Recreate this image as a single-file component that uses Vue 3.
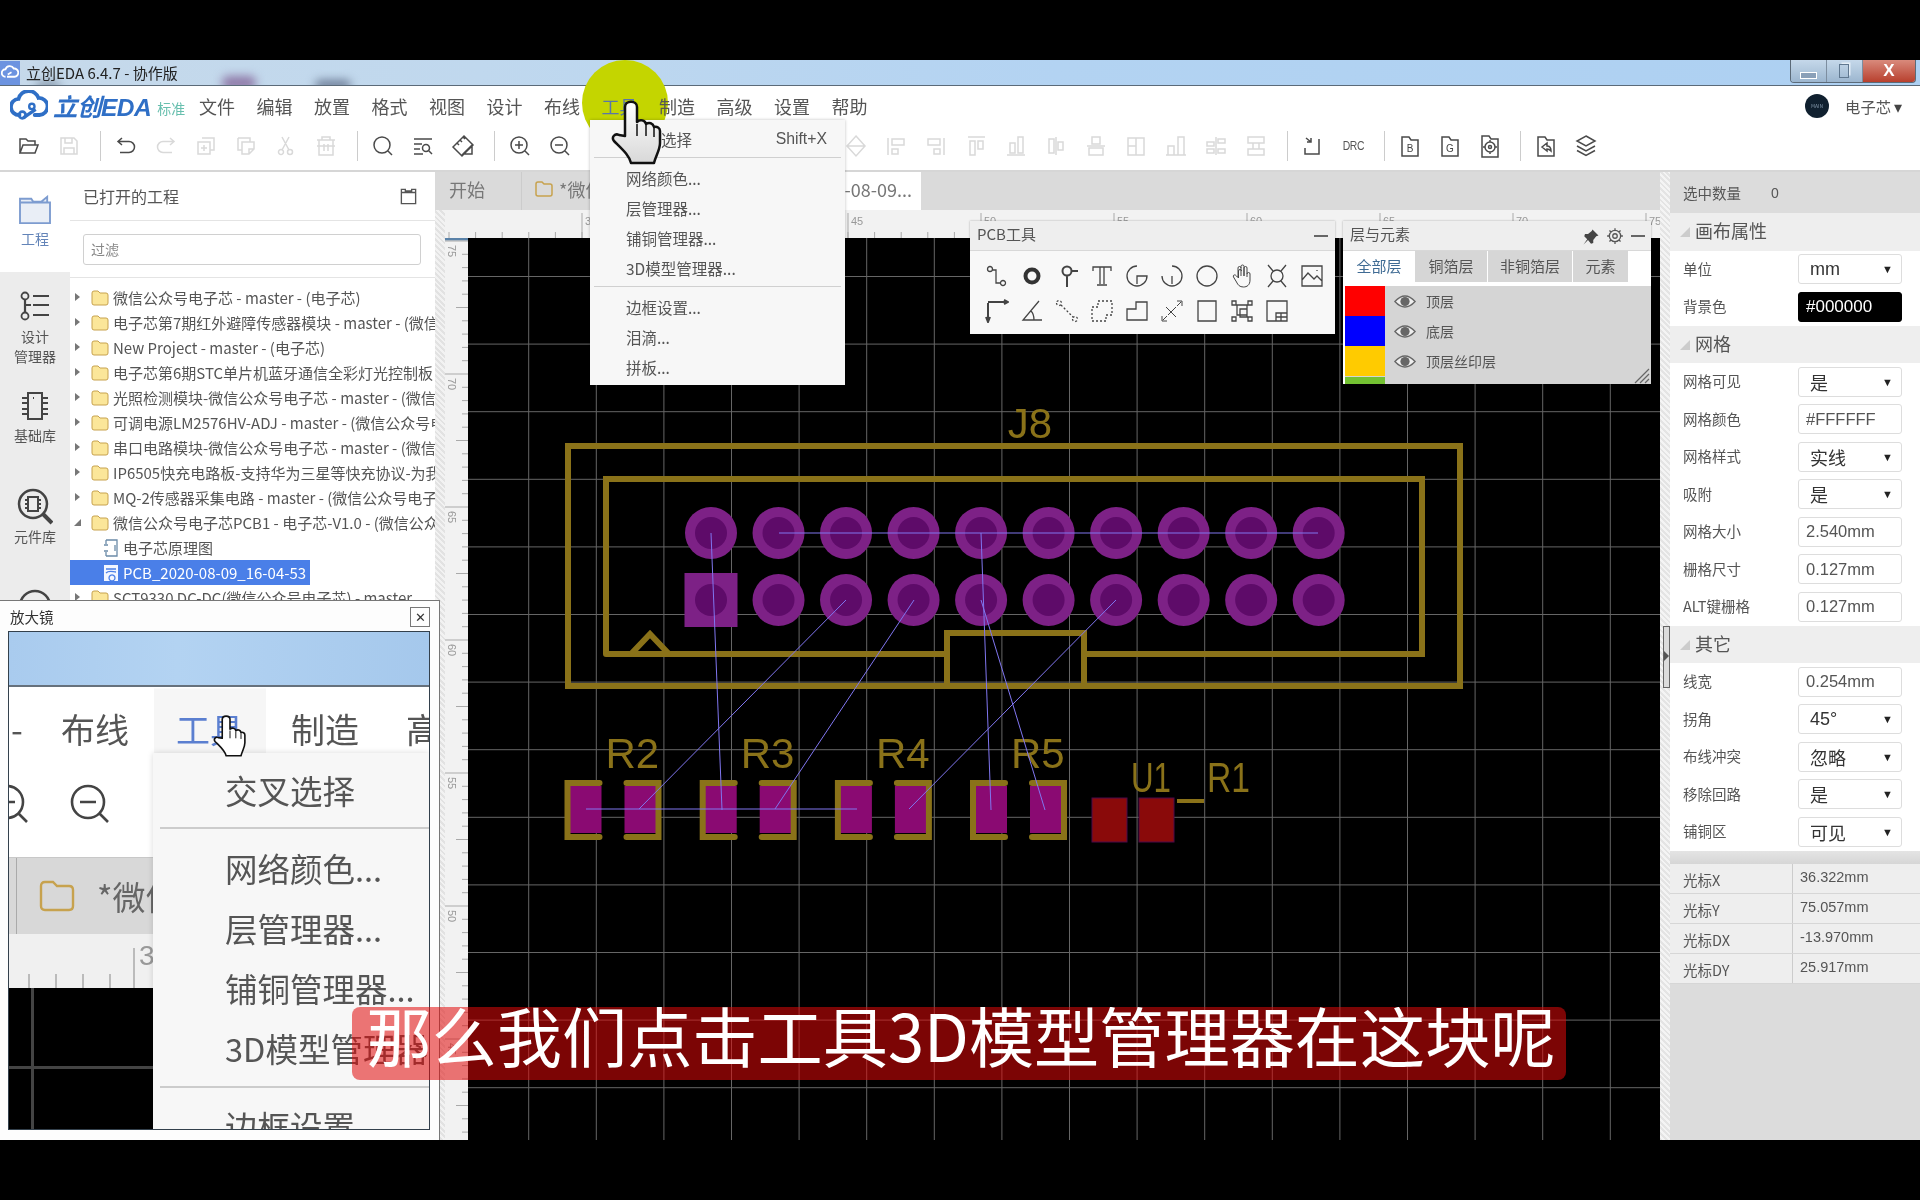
<script setup>
const c = (x, y, r) => `M${x - r} ${y}a${r} ${r} 0 1 0 ${2 * r} 0a${r} ${r} 0 1 0 ${-2 * r} 0`
const range = (a, step, n) => Array.from({ length: n }, (_, i) => a + i * step)

const menus = ['文件', '编辑', '放置', '格式', '视图', '设计', '布线', '工具', '制造', '高级', '设置', '帮助']

const I = {
  open: 'M3 19V5h6l2 2h7v4M3 19h15l3-8H6z',
  save: 'M4 4h13l3 3v13H4zM8 4v5h7V4M7 20v-6h10v6',
  undo: 'M8 4L4 7.5 8 11M4 7.5h11a5.5 5.5 0 0 1 0 11H6',
  redo: 'M16 4l4 3.5-4 3.5M20 7.5H9a5.5 5.5 0 0 0 0 11h9',
  copy: 'M8 4h12v12h-4M4 8h12v12H4zM10 11v6M7 14h6',
  paste: 'M4 4h12v4M4 4v12h4M8 8h12v7l-5 5H8zM15 20v-5h5',
  cut: c(7, 18, 2.5) + c(16, 18, 2.5) + 'M8 16L15 3M15 16L8 3',
  del: 'M8 6V3h8v3M3 6h18M5 6v15h14V6M10 10v7M14 10v7M3 12h18',
  search: c(11, 11, 8) + 'M17 17l4 4',
  find: 'M3 5h18M3 10h8M3 15h6M3 20h9' + c(15, 14, 3.5) + 'M18 17l3 3',
  ruler: 'M2 13L13 2l9 9-11 11zM6 9l2 2M9 6l2 2M12 3l2 2M12 20h9v-9z',
  zin: c(11, 11, 8) + 'M17 17l4 4M7 11h8M11 7v8',
  zout: c(11, 11, 8) + 'M17 17l4 4M7 11h8',
  dia: 'M12 2l9 10-9 10-9-10zM3 12h18',
  al1: 'M4 4v17M8 5h12v6H8zM8 15h6v5H8z',
  al2: 'M20 4v17M4 5h12v6H4zM10 15h6v5h-6z',
  al3: 'M4 3h17M6 7h5v14H6zM14 7h5v8h-5z',
  al4: 'M3 21h18M6 9h5v10H6zM14 3h5v16h-5z',
  al5: 'M12 3v18M5 5h5v14H5zM14 8h5v8h-5z',
  al6: 'M3 12h18M8 3h8v7H8zM5 14h14v7H5z',
  al7: 'M4 4h16v17H4zM12 4v17M4 12h8',
  al8: 'M4 12h6v9H4zM14 3h6v18h-6zM2 21h20',
  al9: 'M12 3v18M3 8h7v4H3zM14 5h7v4h-7zM3 15h7v4H3zM14 15h7v4h-7z',
  al10: 'M4 3h16v6H4zM4 15h16v6H4zM9 9v6M15 9v6',
  route: 'M5 4l5 4M10 4v4H6M18 5v15H4v-6',
  bfile: 'M4 3h7l2 3h7v16H4z',
  cfg: c(12, 13, 5) + c(12, 13, 1.5) + 'M12 6v2M12 18v2M5 13h2M17 13h2M4 2h7l2 3h7v18H4z',
  repl: 'M4 3h7l2 3h7v16H4zM8 13l5-4v3c3 0 4 2 4 5-2-2-2-2-4-2v2z',
  layers: 'M12 2l9 5-9 5-9-5zM3 12l9 5 9-5M3 16.5l9 5 9-5',
}
const tb = [
  { w: 'g1', items: [['open'], ['save', 1]] },
  { w: 'g2', items: [['undo'], ['redo', 1], ['copy', 1], ['paste', 1], ['cut', 1], ['del', 1]] },
  { w: 'g3', items: [['search'], ['find'], ['ruler']] },
  { w: 'g4', items: [['zin'], ['zout']] },
  { w: 'g5', items: [[''], [''], [''], [''], [''], [''], ['dia', 1], ['al1', 1], ['al2', 1], ['al3', 1], ['al4', 1], ['al5', 1], ['al6', 1], ['al7', 1], ['al8', 1], ['al9', 1], ['al10', 1]] },
  { w: 'g6', items: [['route'], ['DRC']] },
  { w: 'g7', items: [['bfile', 0, 'B'], ['bfile', 0, 'G'], ['cfg']] },
  { w: 'g8', items: [['repl'], ['layers']] },
]

const tree = [
  { t: '微信公众号电子芯 - master - (电子芯)', k: 'f' },
  { t: '电子芯第7期红外避障传感器模块 - master - (微信公众号电子芯)', k: 'f' },
  { t: 'New Project - master - (电子芯)', k: 'f' },
  { t: '电子芯第6期STC单片机蓝牙通信全彩灯光控制板 - master', k: 'f' },
  { t: '光照检测模块-微信公众号电子芯 - master - (微信公众号电子芯)', k: 'f' },
  { t: '可调电源LM2576HV-ADJ - master - (微信公众号电子芯)', k: 'f' },
  { t: '串口电路模块-微信公众号电子芯 - master - (微信公众号电子芯)', k: 'f' },
  { t: 'IP6505快充电路板-支持华为三星等快充协议-为我所用', k: 'f' },
  { t: 'MQ-2传感器采集电路 - master - (微信公众号电子芯)', k: 'f' },
  { t: '微信公众号电子芯PCB1 - 电子芯-V1.0 - (微信公众号)', k: 'o' },
  { t: '电子芯原理图', k: 's' },
  { t: 'PCB_2020-08-09_16-04-53', k: 'p' },
  { t: 'SCT9330 DC-DC(微信公众号电子芯) - master', k: 'f' },
]

const hGrid = range(276.5, 67.6, 13)
const vGrid = range(528.7, 67.6, 17)
const topPad = range(711, 67.52, 10)
const rats = [
  [779, 533, 1318, 533], [711, 533, 722, 810], [981, 533, 991, 810], [981, 600, 1045, 810],
  [846, 600, 639, 809], [914, 600, 775, 809], [1116, 600, 909, 809], [586, 809, 857, 809],
]
const res = [{ x: 564.5, n: 'R2' }, { x: 699.7, n: 'R3' }, { x: 834.9, n: 'R4' }, { x: 970, n: 'R5' }]

const topTicks = range(449, 26.6, 46).map((x, i) => ({ x, major: (i + 0) % 5 === 0 }))
const topLabels = [[582, '35'], [715, '40'], [848, '45'], [981, '50'], [1114, '55'], [1247, '60'], [1380, '65'], [1513, '70'], [1646, '75']]
const leftTicks = range(241, 13.3, 68).map((y, i) => ({ y, major: i % 10 === 0, mid: i % 5 === 0 }))
const leftLabels = [[241, '75'], [374, '70'], [507, '65'], [640, '60'], [773, '55'], [906, '50'], [1039, '45']]

const tools1 = [
  { d: c(5, 5, 2.5) + 'M7 6h4v13h4' + c(18, 19, 2.5) },
  { d: c(12, 12, 6.5), s: 'bold' },
  { d: c(12, 7, 4.5) + 'M16.5 7H23M12 11.5V23', s: 'mid' },
  { d: 'M3 7V3h18v4M10 3v17M14 3v17M7 21h10' },
  { d: 'M12 2a10 10 0 1 0 10 10H12v8' },
  { d: 'M12 2a10 10 0 1 1-10 10M12 12v8' },
  { d: c(12, 12, 10) },
  { d: 'M8 13V4a1.5 1.5 0 0 1 3 0M11 12V2.500a1.500 1.500 0 0 1 3 0V12M14 12V4a1.500 1.500 0 0 1 3 0v9M17 10a1.500 1.500 0 0 1 3 0v6c0 5-3 7-6.500 7-4 0-5.500-2-7-5l-3-5c-1-2 1.500-3 3-1l2 2V7a1.500 1.500 0 0 1 3 0', s: 'thin' },
  { d: c(12, 12, 6) + 'M3 1l5 6M21 1l-5 6M3 23l5-6M21 23l-5-6' },
  { d: 'M2 2h20v20H2zM2 16l6-7 6 6 3-3 5 5M17 6v1' },
]
const tools2 = [
  { d: 'M3 4v18M5 3h17M3 3h2M1 18l2 5 2-5M19 1l4 2-4 2', s: 'mid' },
  { d: 'M19 2L3 21h19M11 12c2 2 3 5 3 9' },
  { d: c(4, 4, 2.5) + c(20, 20, 2.5) + 'M6 6l12 12', s: 'dash' },
  { d: 'M8 2h14v14h-6v6H2V8h6z', s: 'dash' },
  { d: 'M2 21V10h9V3h11v18z' },
  { d: 'M8 16l8-8M3 21l4-4M21 3l-4 4M2 17v5h5M22 7V2h-5M6 8l10 10', s: 'thin' },
  { d: 'M3 2h18v20H3z' },
  { d: 'M7 6h10v10H7zM10 10h7v8h-7zM2 2h4v4H2zM18 2h4v4h-4zM2 18h4v4H2zM18 18h4v4h-4z' },
  { d: 'M2 2h20v20H2zM11 14h11v8H11zM11 18h11M16 14v8' },
]

const teeth = range(0, 45, 8).map((a) => {
  const r = (a * Math.PI) / 180
  return `M${(12 + 7.500 * Math.cos(r)).toFixed(1)} ${(12 + 7.500 * Math.sin(r)).toFixed(1)}L${(12 + 10.500 * Math.cos(r)).toFixed(1)} ${(12 + 10.500 * Math.sin(r)).toFixed(1)}`
}).join('')
const gear = c(12, 12, 3) + c(12, 12, 7.500) + teeth

const layers = [
  { n: '顶层', cls: 'red' },
  { n: '底层', cls: 'blue' },
  { n: '顶层丝印层', cls: 'yellow' },
]
const props = [
  { title: '画布属性', rows: [{ l: '单位', v: 'mm', sel: 1 }, { l: '背景色', v: '#000000', dark: 1 }] },
  { title: '网格', rows: [
    { l: '网格可见', v: '是', sel: 1 }, { l: '网格颜色', v: '#FFFFFF' }, { l: '网格样式', v: '实线', sel: 1 },
    { l: '吸附', v: '是', sel: 1 }, { l: '网格大小', v: '2.540mm' }, { l: '栅格尺寸', v: '0.127mm' }, { l: 'ALT键栅格', v: '0.127mm' },
  ] },
  { title: '其它', rows: [
    { l: '线宽', v: '0.254mm' }, { l: '拐角', v: '45°', sel: 1 }, { l: '布线冲突', v: '忽略', sel: 1 },
    { l: '移除回路', v: '是', sel: 1 }, { l: '铺铜区', v: '可见', sel: 1 },
  ] },
]
const cursorRows = [['光标X', '36.322mm'], ['光标Y', '75.057mm'], ['光标DX', '-13.970mm'], ['光标DY', '25.917mm']]
const menuGroups = [
  [['网络颜色...'], ['层管理器...'], ['铺铜管理器...'], ['3D模型管理器...']],
  [['边框设置...'], ['泪滴...'], ['拼板...']],
]
const magItems = ['网络颜色...', '层管理器...', '铺铜管理器...', '3D模型管理器...']
const handD = 'M14 36V7c0-7 12-7 12 0v15c3-3 8-2 9 2 3-2 7-1 8 3 3-1 6 1 6 4v12c0 7-4 12-6 20H20c-2-8-8-13-17-22-3-4 1-8 5-6z'
const handL = 'M26 24v12M35 25v11M43 28v9'
const magTicks = range(19, 27, 4)
</script>

<template>
  <div class="root">
    <div class="band"></div>
    <div class="win">
      <div class="titlebar">
        <i class="blob b1"></i><i class="blob b2"></i><i class="blob b3"></i>
        <span class="appicon">
          <svg viewBox="0 0 24 24" width="18" height="18"><path d="M6 17a5 5 0 0 1 0-10 6 6 0 0 1 11-1 5 5 0 0 1 1 11H8" fill="none" stroke="#fff" stroke-width="2.500"/><path d="M9 14l5-3" stroke="#fff" stroke-width="2"/></svg>
        </span>
        <span class="wintitle">立创EDA 6.4.7 - 协作版</span>
        <div class="winbtns">
          <span class="wb"><i class="wmin"></i></span>
          <span class="wb"><i class="wmax"></i></span>
          <span class="wb close">X</span>
        </div>
      </div>

      <div class="menubar">
        <div class="logo">
          <svg viewBox="0 0 40 32" width="38" height="31"><path d="M10 26a8.500 8.500 0 0 1-1-17A11 11 0 0 1 30 8a9 9 0 0 1 1 18h-5" fill="none" stroke="#2f6fc6" stroke-width="4" stroke-linecap="round"/><path d="M14 29l13-9" stroke="#2f6fc6" stroke-width="3.500"/><circle cx="13" cy="26" r="3.500" fill="none" stroke="#2f6fc6" stroke-width="3"/><circle cx="23" cy="17" r="2.800" fill="none" stroke="#2f6fc6" stroke-width="2.500"/></svg>
          <span class="logotext">立创EDA</span>
          <span class="logotag">标准</span>
        </div>
        <span v-for="m in menus" :key="m" class="menu" :class="{ act: m === '工具' }">{{ m }}</span>
        <div class="user">
          <span class="avatar"><em>MAIN</em></span>
          <span class="uname">电子芯</span>
          <span class="ucaret">▾</span>
        </div>
      </div>

      <div class="toolbar">
        <template v-for="(g, gi) in tb" :key="g.w">
          <i v-if="gi" class="sep" :class="'s' + g.w"></i>
          <span v-for="(it, i) in g.items" :key="i" class="tbtn">
            <span v-if="it[0] === 'DRC'" class="drc">DRC</span>
            <svg v-else-if="it[0]" viewBox="0 0 24 24" width="24" height="24">
              <path :d="I[it[0]]" fill="none" :stroke="it[1] ? '#d9d9d9' : '#4a4a4a'" stroke-width="1.500"/>
              <text v-if="it[2]" x="12" y="18" class="tbl">{{ it[2] }}</text>
            </svg>
          </span>
        </template>
      </div>

      <div class="body">
        <aside class="side">
          <div class="sitem s1 active">
            <svg viewBox="0 0 36 32" width="36" height="30"><path d="M2 8V4h12l2 3h9l6-5v6M2 8h32v22H2z" fill="#e9eef6" stroke="#7d9cd0" stroke-width="2"/></svg>
            <span>工程</span>
          </div>
          <div class="sitem s2">
            <svg viewBox="0 0 32 30" width="32" height="30"><path d="M6 8v14M14 5h16M14 14h16M14 24h16" stroke="#444" stroke-width="2.200" fill="none"/><path :d="c(6, 5, 3.500) + c(6, 25, 3.500)" stroke="#444" stroke-width="1.800" fill="none"/><path d="M6 14h6" stroke="#444" stroke-width="2"/></svg>
            <span>设计<br />管理器</span>
          </div>
          <div class="sitem s3">
            <svg viewBox="0 0 32 32" width="32" height="32"><path d="M9 3h14v26H9zM3 8h6M3 13h6M3 19h6M3 24h6M23 8h6M23 13h6M23 19h6M23 24h6" fill="none" stroke="#444" stroke-width="2"/><path d="M14 8h1" stroke="#444" stroke-width="2"/></svg>
            <span>基础库</span>
          </div>
          <div class="sitem s4">
            <svg viewBox="0 0 36 38" width="36" height="38"><path :d="c(16, 16, 14)" fill="none" stroke="#444" stroke-width="2.500"/><path d="M26 26l9 9" stroke="#444" stroke-width="4"/><path d="M11 9h10v14H11zM8 12h3M8 16h3M8 20h3M21 12h3M21 16h3M21 20h3" fill="none" stroke="#444" stroke-width="2"/></svg>
            <span>元件库</span>
          </div>
          <div class="sitem s5">
            <svg viewBox="0 0 36 36" width="36" height="36"><path :d="c(18, 18, 15)" fill="none" stroke="#444" stroke-width="2.500"/></svg>
          </div>
        </aside>

        <section class="proj">
          <div class="projhead">
            <span>已打开的工程</span>
            <svg viewBox="0 0 24 24" width="19" height="19"><path d="M3 7V3h5v2h8V3h5v4M3 7h18v14H3z" fill="none" stroke="#555" stroke-width="1.700"/></svg>
          </div>
          <div class="filter"><div class="finput">过滤</div></div>
          <div class="tree">
            <div v-for="(r, i) in tree" :key="i" class="trow" :class="'k' + r.k">
              <i v-if="r.k === 'f'" class="caret"></i>
              <i v-if="r.k === 'o'" class="caret down"></i>
              <svg v-if="r.k === 'f' || r.k === 'o'" viewBox="0 0 18 16" width="18" height="16" class="fold"><path d="M1 3q0-2 2-2h4l2 2h6q2 0 2 2v8q0 2-2 2H3q-2 0-2-2z" fill="#fbe699" stroke="#c7a24e"/></svg>
              <svg v-if="r.k === 's'" viewBox="0 0 16 18" width="16" height="18" class="leaf"><path d="M3 1h11v16H3M1 6h4M1 12h4M3 1v4M3 13v4M12 6v6" fill="none" stroke="#6b8ba8" stroke-width="1.300"/></svg>
              <svg v-if="r.k === 'p'" viewBox="0 0 16 18" width="16" height="18" class="leaf"><path d="M1 1h14v16H1z" fill="#f2f6ff"/><path d="M3 5h10M3 9c3-3 7-1 10-1M6 14a3 3 0 1 0 0-.1" fill="none" stroke="#4a7fe8" stroke-width="1.300"/></svg>
              <span class="tlabel">{{ r.t }}</span>
            </div>
          </div>
        </section>

        <section class="center">
          <div class="tabs">
            <span class="tab taba">开始</span>
            <span class="tab tabb">
              <svg viewBox="0 0 18 16" width="18" height="16"><path d="M1 3q0-2 2-2h4l2 2h6q2 0 2 2v8q0 2-2 2H3q-2 0-2-2z" fill="none" stroke="#c7a24e" stroke-width="1.500"/></svg>
              *微信公众号
            </span>
            <span class="tab tabc">PCB_2020-08-09...</span>
          </div>
          <div class="workarea">
            <div class="dots"></div>
            <div class="stage">
              <svg class="rtop" viewBox="445 210 1215 28" width="1215" height="28">
                <line v-for="t in topTicks" :key="t.x" :x1="t.x" :x2="t.x" y1="232" y2="238" stroke="#aaa"/>
                <g v-for="l in topLabels" :key="l[1]">
                  <line :x1="l[0]" :x2="l[0]" y1="213" y2="238" stroke="#aaa"/>
                  <text :x="l[0] + 3" y="225" class="rl">{{ l[1] }}</text>
                </g>
              </svg>
              <div class="stage2">
                <svg class="rleft" viewBox="445 238 23 902" width="23" height="902">
                  <line x1="445" x2="468" y1="239" y2="239" stroke="#5a82a8" stroke-width="3"/>
                  <line v-for="t in leftTicks" :key="t.y" :y1="t.y" :y2="t.y" :x1="t.major ? 445 : (t.mid ? 456 : 462)" x2="468" stroke="#aaa"/>
                  <text v-for="l in leftLabels" :key="l[1]" :transform="`translate(448 ${l[0] + 4}) rotate(90)`" class="rl">{{ l[1] }}</text>
                </svg>
                <svg class="board" viewBox="468 238 1192 902" width="1192" height="902">
                  <rect x="468" y="238" width="1192" height="902" fill="#000"/>
                  <line v-for="y in hGrid" :key="y" x1="468" x2="1660" :y1="y" :y2="y" stroke="#666"/>
                  <line v-for="x in vGrid" :key="x" :x1="x" :x2="x" y1="238" y2="1140" stroke="#666"/>
                  <g fill="none" stroke="#8a7219" stroke-width="6" stroke-linecap="round">
                    <path d="M568 446H1460V686H568zM606 654V479H1422V654H1084M606 654H947M947 686V633H1084V686"/>
                    <path d="M632 653L650 634 668 653"/>
                  </g>
                  <text x="1030" y="438" class="silk mid">J8</text>
                  <g v-for="x in topPad" :key="x">
                    <circle :cx="x" cy="533" r="26" fill="#7d2186"/>
                    <circle :cx="x" cy="533" r="16" fill="#5e0b69"/>
                  </g>
                  <g v-for="(x, i) in topPad" :key="'b' + x">
                    <rect v-if="i === 0" x="684.500" y="573" width="53" height="54" fill="#7d2186"/>
                    <circle v-else :cx="x" cy="600" r="26" fill="#7d2186"/>
                    <circle :cx="x" cy="600" r="16" fill="#5e0b69"/>
                  </g>
                  <g v-for="r in res" :key="r.n">
                    <rect :x="r.x + 5" y="786" width="32" height="47" fill="#8a0a72"/>
                    <rect :x="r.x + 60" y="786" width="32" height="47" fill="#8a0a72"/>
                    <path :d="`M${r.x + 35} 783H${r.x + 3}V837H${r.x + 35}M${r.x + 62} 783H${r.x + 94}V837H${r.x + 62}`" fill="none" stroke="#8a7219" stroke-width="6" stroke-linecap="round"/>
                    <text :x="r.x + 41" y="768" class="silk">{{ r.n }}</text>
                  </g>
                  <rect x="1092" y="798" width="35" height="44" fill="#8a0a0a" stroke="#4a0a4a"/>
                  <rect x="1139" y="798" width="35" height="44" fill="#8a0a0a" stroke="#4a0a4a"/>
                  <text x="1131" y="792" class="silk" textLength="40" lengthAdjust="spacingAndGlyphs">U1</text>
                  <text x="1207" y="792" class="silk" textLength="43" lengthAdjust="spacingAndGlyphs">R1</text>
                  <line x1="1177" x2="1204" y1="801" y2="801" stroke="#8a7219" stroke-width="4"/>
                  <line v-for="(l, i) in rats" :key="i" :x1="l[0]" :y1="l[1]" :x2="l[2]" :y2="l[3]" stroke="#8076f0"/>
                </svg>
              </div>
            </div>
          </div>
        </section>

        <aside class="props">
          <div class="pdots"><span class="handle"><i></i></span></div>
          <div class="pmain">
            <div class="selcount"><span>选中数量</span><span class="zero">0</span></div>
            <template v-for="s in props" :key="s.title">
              <div class="psec"><i class="ptri"></i>{{ s.title }}</div>
              <div v-for="r in s.rows" :key="r.l" class="prow">
                <span class="plabel">{{ r.l }}</span>
                <span class="pfield" :class="{ dark: r.dark, sel: r.sel }">
                  <span>{{ r.v }}</span><em v-if="r.sel">▼</em>
                </span>
              </div>
            </template>
            <div class="pstrip"></div>
            <div v-for="r in cursorRows" :key="r[0]" class="crow">
              <span class="cl">{{ r[0] }}</span><span class="cv">{{ r[1] }}</span>
            </div>
          </div>
        </aside>
      </div>
    </div>
    <div class="band"></div>

    <i class="spot"></i>

    <div class="dropdown">
      <div class="ditem dfirst"><span>交叉选择</span><span class="key">Shift+X</span></div>
      <i class="ddiv d1"></i>
      <div v-for="it in menuGroups[0]" :key="it[0]" class="ditem">{{ it[0] }}</div>
      <i class="ddiv d2"></i>
      <div v-for="it in menuGroups[1]" :key="it[0]" class="ditem">{{ it[0] }}</div>
    </div>

    <svg class="hand" viewBox="0 0 52 68" width="52" height="68">
      <defs><linearGradient id="hg" x1="0" y1="0" x2="0" y2="1"><stop offset="0" stop-color="#fff"/><stop offset="1" stop-color="#d8d8d8"/></linearGradient></defs>
      <path :d="handD" fill="url(#hg)" stroke="#111" stroke-width="2.500" stroke-linejoin="round"/>
      <path :d="handL" stroke="#111" stroke-width="1.500"/>
    </svg>

    <div class="tool-panel">
      <div class="ptitle"><span>PCB工具</span><i class="pminus"></i></div>
      <div class="toolgrid">
        <span v-for="(t, i) in tools1" :key="'a' + i" class="tool">
          <svg viewBox="0 0 24 24" width="24" height="24"><path :d="t.d" class="tp" :class="t.s" /></svg>
        </span>
        <span v-for="(t, i) in tools2" :key="'b' + i" class="tool">
          <svg viewBox="0 0 24 24" width="24" height="24"><path :d="t.d" class="tp" :class="t.s" /></svg>
        </span>
      </div>
    </div>

    <div class="layer-panel">
      <div class="ptitle"><span>层与元素</span>
        <svg class="pin" viewBox="0 0 24 24" width="18" height="18"><path d="M14 2l8 8-3 1-4 5 0 4-3 1-4-5-6 6 5-7-4-4 1-3 4 0 5-4z" fill="#444"/></svg>
        <svg class="gearic" viewBox="0 0 24 24" width="18" height="18"><path :d="gear" fill="none" stroke="#555" stroke-width="1.700"/></svg>
        <i class="pminus small"></i>
      </div>
      <div class="ltabs">
        <span class="ltab on">全部层</span><span class="ltab t2">铜箔层</span><span class="ltab t3">非铜箔层</span><span class="ltab t4">元素</span>
      </div>
      <div class="lbody">
        <div v-for="l in layers" :key="l.n" class="lrow">
          <i class="swatch" :class="l.cls"></i>
          <svg viewBox="0 0 24 16" width="22" height="15"><path d="M1 8q11-12 22 0-11 12-22 0z" fill="#eee" stroke="#666" stroke-width="1.500"/><circle cx="12" cy="8" r="5" fill="#666"/></svg>
          <span>{{ l.n }}</span>
        </div>
        <i class="swatch green"></i>
        <svg class="grip" viewBox="0 0 16 16" width="16" height="16"><path d="M15 1L1 15M15 6L6 15M15 11L11 15" stroke="#666" stroke-width="1.200"/></svg>
      </div>
    </div>

    <div class="mag">
      <div class="magtitle"><span>放大镜</span><span class="magclose">✕</span></div>
      <div class="magview">
        <div class="magband"></div>
        <div class="magwhite">
          <div class="magmenu">
            <span class="mm dash">-</span><span class="mm">布线</span><span class="mm on">工具</span><span class="mm">制造</span><span class="mm">高级</span>
          </div>
          <div class="magicons">
            <svg viewBox="0 0 24 24" width="48" height="48" class="mz1"><path :d="I.zin" fill="none" stroke="#444" stroke-width="1.300"/></svg>
            <svg viewBox="0 0 24 24" width="48" height="48" class="mz2"><path :d="I.zout" fill="none" stroke="#444" stroke-width="1.300"/></svg>
          </div>
        </div>
        <div class="magtabs">
          <i class="magtabedge"></i>
          <svg viewBox="0 0 18 16" width="36" height="32"><path d="M1 3q0-2 2-2h4l2 2h6q2 0 2 2v8q0 2-2 2H3q-2 0-2-2z" fill="none" stroke="#c7a24e" stroke-width="1.200"/></svg>
          <span>*微信</span>
        </div>
        <div class="magruler">
          <i v-for="x in magTicks" :key="x" class="mtick" :style="{ left: x + 'px' }"></i>
          <i class="mtick big"></i><span class="m3">3</span>
        </div>
        <div class="magblack"><i class="mgv"></i><i class="mgh"></i></div>
        <div class="magdrop">
          <div class="mitem mfirst">交叉选择</div>
          <i class="mdiv"></i>
          <div v-for="m in magItems" :key="m" class="mitem">{{ m }}</div>
          <i class="mdiv two"></i>
          <div class="mitem last">边框设置</div>
        </div>
        <svg class="mhand" viewBox="0 0 52 68" width="34" height="44">
          <path :d="handD" fill="#fff" stroke="#111" stroke-width="2.500" stroke-linejoin="round"/>
          <path :d="handL" stroke="#111" stroke-width="1.500"/>
        </svg>
      </div>
    </div>

    <div class="subtitle">那么我们点击工具3D模型管理器在这块呢</div>
  </div>
</template>

<style>
html, body { margin: 0; background: #000; }
</style>

<style scoped>
.root { position: relative; width: 1920px; height: 1200px; overflow: hidden; background: #000; font-family: "Noto Sans CJK SC", "Liberation Sans", sans-serif; color: #555; filter: blur(0.35px); }
.band { height: 60px; background: #000; }
.win { height: 1080px; display: flex; flex-direction: column; background: #fff; }
i, em { font-style: normal; display: block; }

.titlebar { position: relative; height: 25px; flex: none; display: flex; align-items: center; overflow: hidden; border-bottom: 1px solid #5b6a78; box-sizing: content-box; background: linear-gradient(90deg, #c6d9ea 0, #c0d8ee 25%, #b3d3f2 55%, #add0f2 100%); color: #222; font-size: 15px; }
.blob { position: absolute; filter: blur(5px); border-radius: 6px; }
.b1 { left: 222px; top: 16px; width: 34px; height: 14px; background: #8f7aa8; }
.b2 { left: 315px; top: 20px; width: 36px; height: 10px; background: #6c7c96; }
.b3 { left: 36px; top: 22px; width: 24px; height: 8px; background: #7d8ea0; }
.appicon { position: relative; width: 20px; height: 24px; background: #6c93e0; display: flex; align-items: center; justify-content: center; margin-right: 6px; }
.wintitle { position: relative; }
.winbtns { position: absolute; right: 4px; top: 0; height: 23px; width: 126px; display: flex; border: 1px solid #5b6a78; border-top: 0; border-radius: 0 0 4px 4px; overflow: hidden; box-sizing: border-box; }
.wb { flex: 1; display: flex; align-items: center; justify-content: center; background: linear-gradient(#c5d8ea, #9cb6cf); border-right: 1px solid #7d8ea0; }
.wb.close { flex: 1.500; background: linear-gradient(#d98a7c, #b8402e); color: #fff; font-family: "Liberation Sans", sans-serif; font-weight: 700; font-size: 17px; border: 0; }
.wmin { width: 15px; height: 5px; border: 1px solid #fff; background: #8aa0b8; margin-top: 8px; }
.wmax { width: 8px; height: 12px; border: 1.500px solid #607890; box-shadow: 2px -2px 0 -0.500px #e4eef7; }

.menubar { position: relative; z-index: 2; height: 39px; flex: none; display: flex; align-items: center; font-size: 18px; color: #555; }
.logo { width: 199px; flex: none; padding-left: 10px; box-sizing: border-box; display: flex; align-items: center; }
.logotext { margin-left: 5px; font-family: "Liberation Sans", "Noto Sans CJK SC", sans-serif; font-weight: 700; font-style: italic; font-size: 24.500px; letter-spacing: -0.500px; color: #2f6fc6; }
.logotag { margin-left: 6px; font-size: 14px; color: #68bfae; margin-top: 5px; }
.menu { width: 36px; margin-right: 21.500px; flex: none; white-space: nowrap; }
.menu.act { color: #5a76a8; }
.user { margin-left: auto; display: flex; align-items: center; margin-right: 18px; }
.avatar { width: 24px; height: 24px; border-radius: 50%; background: #10202f; display: flex; align-items: center; justify-content: center; margin-right: 16px; }
.avatar em { color: #7f93a6; font-size: 5px; }
.uname { font-size: 15.300px; color: #555; }
.ucaret { margin-left: 3px; font-size: 16px; color: #444; }

.toolbar { position: relative; z-index: 2; height: 45px; flex: none; display: flex; align-items: center; padding: 0 0 4px 9px; box-sizing: border-box; }
.tbtn { width: 40px; height: 24px; flex: none; display: flex; align-items: center; justify-content: center; }
.tbl { font: 10px "Liberation Sans", sans-serif; text-anchor: middle; fill: #444; }
.drc { font: 13px "Liberation Sans", sans-serif; letter-spacing: -0.500px; color: #555; transform: scaleX(.8); }
.sep { width: 1px; height: 30px; background: #ccc; margin: 0 5px 0 11px; flex: none; }
.sg5 { background: transparent; width: 0; margin: 0 6px 0 10px; }
.sg6 { margin: 0 5px 0 11px; }
.sg7 { margin: 0 5px 0 11px; }
.sg8 { margin: 0 5px 0 10px; }

.body { flex: 1; min-height: 0; display: flex; border-top: 2px solid #d6d6d6; }
.side { width: 70px; flex: none; background: #ececec; display: flex; flex-direction: column; align-items: center; overflow: hidden; }
.sitem { width: 100%; display: flex; flex-direction: column; align-items: center; font-size: 14px; line-height: 20px; text-align: center; color: #555; flex: none; box-sizing: border-box; }
.s1 { background: #fff; height: 100px; padding-top: 23px; color: #6384b8; }
.s1 span { margin-top: 3px; }
.s2 { height: 106px; padding-top: 19px; }
.s2 span { margin-top: 5px; }
.s3 { height: 92px; padding-top: 12px; }
.s3 span { margin-top: 3px; }
.s4 { height: 98px; padding-top: 18px; }
.s4 span { margin-top: 0; }
.s5 { padding-top: 20px; }

.proj { width: 365px; flex: none; display: flex; flex-direction: column; overflow: hidden; }
.projhead { height: 48px; flex: none; display: flex; align-items: center; justify-content: space-between; padding: 0 17px 0 13px; border-bottom: 1px solid #e4e4e4; font-size: 16px; color: #555; }
.filter { height: 57px; flex: none; padding: 13px 13px 0; box-sizing: border-box; border-bottom: 1px solid #e4e4e4; }
.finput { height: 31px; width: 338px; box-sizing: border-box; border: 1px solid #d0d0d0; border-radius: 3px; padding-left: 7px; font-size: 14px; line-height: 29px; color: #888; }
.tree { padding-top: 7px; font-size: 15px; color: #555; }
.trow { height: 25px; display: flex; align-items: center; white-space: nowrap; position: relative; overflow: hidden; padding-left: 43px; }
.caret { position: absolute; left: 5px; top: 8px; width: 0; height: 0; border-left: 5px solid #777; border-top: 4.500px solid transparent; border-bottom: 4.500px solid transparent; }
.caret.down { top: 9px; left: 4px; border: 0; border-right: 7px solid #777; border-top: 7px solid transparent; }
.fold { position: absolute; left: 21px; top: 5px; }
.leaf { position: absolute; left: 33px; top: 4px; }
.ks, .kp { padding-left: 53px; }
.kp { width: 240px; box-sizing: border-box; background: #4a7fe8; color: #fff; }

.center { flex: 1; min-width: 0; display: flex; flex-direction: column; }
.tabs { height: 38px; flex: none; display: flex; background: #dadada; font-size: 18px; color: #777; }
.tab { display: flex; align-items: center; box-sizing: border-box; white-space: nowrap; overflow: hidden; padding-bottom: 4px; }
.tab svg { flex: none; }
.taba { width: 87px; padding-left: 14px; border-right: 1px solid #ccc; }
.tabb { width: 108px; padding-left: 13px; gap: 6px; border-right: 1px solid #ccc; }
.tabc { width: 291px; justify-content: flex-end; background: #fff; padding-right: 9px; }
.workarea { flex: 1; min-height: 0; display: flex; }
.dots { width: 10px; flex: none; background: repeating-linear-gradient(45deg, #e2e2e2 0 2px, #f2f2f2 2px 4px); }
.stage { flex: 1; min-width: 0; display: flex; flex-direction: column; background: #f2f2f2; }
.rtop, .rleft, .board { display: block; flex: none; }
.stage2 { flex: 1; min-height: 0; display: flex; }
.rl { font: 11px "Liberation Sans", sans-serif; fill: #999; }
.silk { font: 42px "Liberation Sans", sans-serif; fill: #8a7219; }
.silk.mid { text-anchor: middle; }

.props { width: 260px; flex: none; display: flex; background: #dcdcdc; }
.pdots { position: relative; width: 10px; flex: none; background: repeating-linear-gradient(45deg, #e4e4e4 0 2px, #f4f4f4 2px 4px); }
.handle { position: absolute; left: 3px; top: 454px; width: 5px; height: 60px; border: 1px solid #666; background: #dcdcdc; }
.handle i { position: absolute; left: 0; top: 24px; width: 0; height: 0; border-left: 5px solid #555; border-top: 5px solid transparent; border-bottom: 5px solid transparent; }
.pmain { flex: 1; min-width: 0; font-size: 14.500px; color: #555; }
.selcount { height: 41px; display: flex; align-items: center; padding-left: 13px; background: #dcdcdc; }
.zero { margin-left: 30px; font-family: "Liberation Sans", sans-serif; font-size: 14px; }
.psec { position: relative; height: 37.500px; padding-left: 25px; line-height: 35.500px; font-size: 18px; background: #eee; color: #555; }
.ptri { position: absolute; left: 10px; top: 14px; width: 0; height: 0; border-bottom: 10px solid #ccc; border-left: 10px solid transparent; }
.prow { height: 37.500px; background: #fff; display: flex; align-items: center; padding-left: 13px; }
.plabel { width: 115px; flex: none; white-space: nowrap; padding-bottom: 2px; }
.pfield { width: 104px; height: 30px; box-sizing: border-box; border: 1px solid #ddd; border-radius: 3px; display: flex; align-items: center; padding: 0 7px; font: 16.500px "Liberation Sans", "Noto Sans CJK SC", sans-serif; color: #555; background: #fff; }
.pfield.sel { padding: 0 8px 0 11px; justify-content: space-between; color: #333; font-size: 18px; }
.pfield.sel em { font-size: 11px; color: #222; }
.pfield.dark { background: #000; border-color: #000; color: #fff; font-size: 17px; }
.pstrip { height: 13px; background: linear-gradient(#e4e4e4, #d6d6d6); }
.crow { height: 30px; display: flex; background: #eee; border-bottom: 1px solid #d6d6d6; box-sizing: border-box; }
.cl { width: 123px; flex: none; padding-left: 13px; box-sizing: border-box; border-right: 1px solid #ccc; font-size: 14.500px; line-height: 32px; }
.cv { padding-left: 7px; font: 14.500px/26px "Liberation Sans", sans-serif; }

.spot { position: absolute; z-index: 1; left: 582px; top: 60px; width: 86px; height: 86px; border-radius: 50%; background: #c4d500; }
.dropdown { position: absolute; z-index: 3; left: 590px; top: 120px; width: 255px; height: 265px; box-sizing: border-box; padding-top: 5px; background: #f7f7f7; box-shadow: 0 0 3px rgba(0,0,0,.25); font-size: 15.500px; color: #555; }
.ditem { height: 30px; line-height: 30px; padding-left: 36px; display: flex; justify-content: space-between; white-space: nowrap; }
.ditem.dfirst { padding-left: 40px; padding-right: 18px; line-height: 28px; }
.key { font: 15.800px/28px "Liberation Sans", sans-serif; }
.ddiv { height: 1px; background: #d0d0d0; margin: 0 4px; }
.d1 { margin-top: 2px; margin-bottom: 5px; }
.d2 { margin-top: 3px; margin-bottom: 5px; }
.hand { position: absolute; z-index: 4; left: 611px; top: 100px; }

.tool-panel, .layer-panel { position: absolute; top: 221px; box-shadow: 0 0 2px rgba(0,0,0,.3); }
.tool-panel { left: 970px; width: 365px; height: 113px; background: #f8f8f8; }
.layer-panel { left: 1343px; width: 308px; height: 163px; background: #fff; }
.ptitle { position: relative; height: 30px; background: #eee; border-bottom: 1px solid #d8d8d8; box-sizing: border-box; display: flex; align-items: center; padding: 0 0 4px 7px; font-size: 15px; color: #555; }
.pminus { position: absolute; right: 7px; top: 14px; width: 14px; height: 2px; background: #666; }
.pminus.small { right: 6px; }
.pin { position: absolute; right: 51px; top: 7px; }
.gearic { position: absolute; right: 27px; top: 6px; }
.toolgrid { display: grid; grid-template-columns: repeat(10, 35px); grid-auto-rows: 35px; padding: 7px 0 0 9px; }
.tool { display: flex; align-items: center; justify-content: center; }
.tp { fill: none; stroke: #444; stroke-width: 1.300; }
.tp.bold { stroke-width: 4; stroke: #333; }
.tp.mid { stroke-width: 2; }
.tp.thin { stroke-width: 1; }
.tp.dash { stroke-dasharray: 2 2; }
.ltabs { height: 31px; display: flex; font-size: 15px; margin-bottom: 4px; }
.ltab { height: 31px; line-height: 29px; text-align: center; background: #d6d6d6; box-sizing: border-box; flex: none; color: #555; margin-right: 1px; }
.ltab.on { width: 72px; background: #fff; color: #3f6b94; margin-right: 0; }
.t2 { width: 72px; }
.t3 { width: 84px; }
.t4 { width: 55px; }
.lbody { position: relative; height: 98px; background: #d5d5d5; margin-left: 2px; overflow: hidden; }
.lrow { height: 30px; display: flex; align-items: center; font-size: 14px; color: #555; }
.lrow svg { margin: 0 10px 0 9px; }
.swatch { width: 40px; height: 30px; flex: none; }
.red { background: #f00; }
.blue { background: #00f; }
.yellow { background: #ffcb00; }
.swatch.green { height: 7px; background: #74c232; position: absolute; left: 0; bottom: 0; }
.grip { position: absolute; right: 1px; bottom: 0; }

.mag { position: absolute; left: 0; top: 600px; width: 440px; height: 540px; box-sizing: border-box; background: #fdfdfd; border-top: 1px solid #777; border-right: 1px solid #777; padding: 0 9px 10px 8px; display: flex; flex-direction: column; }
.magtitle { height: 30px; flex: none; display: flex; align-items: center; justify-content: space-between; font-size: 14.500px; color: #333; padding-left: 2px; }
.magclose { width: 20px; height: 20px; box-sizing: border-box; border: 1px solid #777; font-size: 13px; line-height: 18px; text-align: center; margin-top: 2px; margin-right: 0; }
.magview { position: relative; flex: 1; min-height: 0; overflow: hidden; border: 1px solid #33404c; display: flex; flex-direction: column; }
.magband { height: 53px; flex: none; background: linear-gradient(90deg, #a9cbee, #b3d3f2 40%, #a5c8ec); border-bottom: 2px solid #66717c; }
.magwhite { height: 170px; flex: none; background: #fff; position: relative; }
.magmenu { display: flex; height: 82px; align-items: center; font-size: 34px; color: #555; padding-left: 2px; white-space: nowrap; padding-top: 0; }
.mm { width: 68px; margin-right: 47px; flex: none; }
.mm.dash { width: 10px; margin-right: 40px; }
.mm.on { color: #5b7fd0; box-shadow: 0 0 0 22px #f6f6f6; background: #f6f6f6; clip-path: inset(-15px -22px -30px -22px); }
.magicons { position: relative; height: 60px; }
.mz1 { position: absolute; left: -24px; top: 11px; }
.mz2 { position: absolute; left: 57px; top: 11px; }
.magtabs { height: 77px; flex: none; display: flex; align-items: center; gap: 22px; padding-left: 30px; background: #d8d8d8; font-size: 33px; color: #666; position: relative; white-space: nowrap; border-top: 1px solid #c8c8c8; box-sizing: border-box; }
.magtabedge { position: absolute; left: 7px; top: 0; bottom: 0; width: 1px; background: #aaa; }
.magruler { position: relative; height: 54px; flex: none; background: #f0f0f0; }
.mtick { position: absolute; bottom: 0; width: 2px; height: 14px; background: #bbb; }
.mtick.big { left: 124px; height: 40px; }
.m3 { position: absolute; left: 130px; top: 6px; font: 28px "Liberation Sans", sans-serif; color: #999; }
.magblack { flex: 1; background: #000; position: relative; }
.mgv { position: absolute; left: 22px; top: 0; bottom: 0; width: 3px; background: #444; }
.mgh { position: absolute; left: 0; right: 0; top: 78px; height: 3px; background: #444; }
.magdrop { position: absolute; left: 144px; top: 121px; right: 0; bottom: 0; padding: 7px 0 0 72px; background: #f7f7f7; box-shadow: 0 0 6px rgba(0,0,0,.15); font-size: 32.500px; color: #555; white-space: nowrap; }
.mitem { height: 60px; line-height: 60px; }
.mdiv { height: 2px; background: #ccc; margin: 7.500px 0 0 -65px; }
.mitem.mfirst { height: 60px; margin-bottom: -1px; }
.mdiv + .mitem { margin-top: 9.500px; }
.mdiv.two { margin-top: 8px; }
.mitem.last { margin-top: 8px; }
.mhand { position: absolute; left: 204px; top: 83px; }

.subtitle { position: absolute; left: 352px; top: 1007px; width: 1214px; height: 73px; box-sizing: border-box; padding-left: 4px; border-radius: 8px; background: rgba(225, 10, 10, .55); color: #fff; font-size: 65.200px; line-height: 53px; text-align: center; white-space: nowrap; overflow: hidden; }
</style>
